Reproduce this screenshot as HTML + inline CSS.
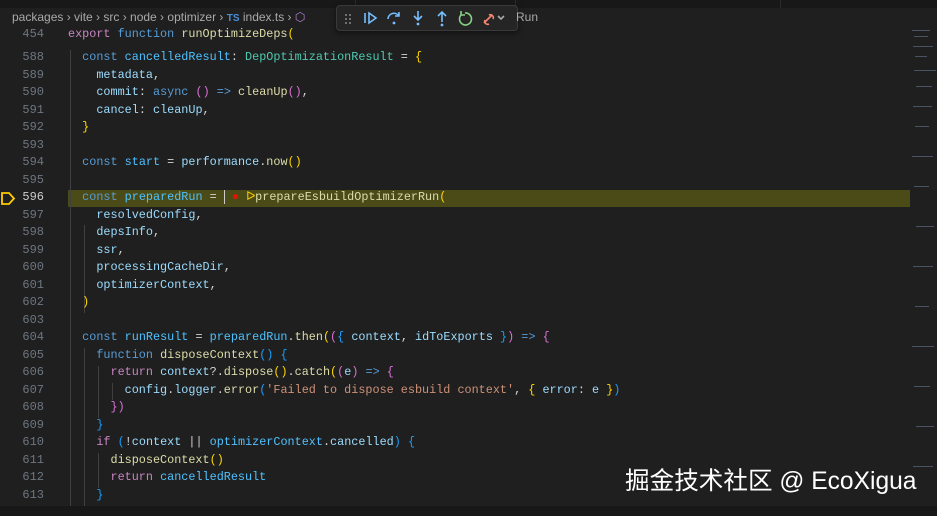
<!DOCTYPE html><html><head><meta charset="utf-8"><style>
body{margin:0;width:937px;height:516px;background:#1f1f1f;overflow:hidden;position:relative;font-family:"Liberation Mono",monospace}
.top{position:absolute;left:0;top:0;width:937px;height:8px;background:#181818}
.top i{position:absolute;top:0;height:8px;width:1px;background:#2b2b2b}
.bc{position:absolute;left:12px;top:8px;height:18px;font:12px/18px "Liberation Sans",sans-serif;color:#a9a9a9;white-space:nowrap}
.bc .ts{color:#4a8fd8;font-size:10px;font-weight:bold}
.dbg{position:absolute;left:336px;top:5px;width:180px;height:24px;background:#252526;border:1px solid #3a3a3a;border-radius:4px;box-shadow:0 2px 6px #0008}
.run{position:absolute;left:516px;top:8px;font:12px/18px "Liberation Sans",sans-serif;color:#a9a9a9}
.ln{position:absolute;left:0;width:44px;text-align:right;font-size:12px;color:#6e7681;line-height:17.5px}
.cl{position:absolute;left:68px;font-size:11.8px;line-height:17.5px;white-space:pre;color:#d4d4d4}
.hl{position:absolute;left:68px;top:190px;width:842px;height:17px;background:#4b4b18}
.g{position:absolute;width:1px;background:#404040}
.k{color:#569cd6}.p{color:#c586c0}.f{color:#dcdcaa}.v{color:#9cdcfe}.c{color:#4fc1ff}.t{color:#4ec9b0}.s{color:#ce9178}.y{color:#ffd700}.m{color:#da70d6}.b{color:#179fff}
.mini{position:absolute;left:910px;top:26px;width:27px;height:480px}
.wm{position:absolute;left:625px;top:465px;font:24.6px/34px "Liberation Sans","Noto Sans CJK SC",sans-serif;color:#fff;white-space:nowrap}
.bot{position:absolute;left:0;top:506px;width:937px;height:10px;background:#181818}
</style></head><body>
<div class="top"><i style="left:355px"></i><i style="left:515px"></i><i style="left:780px"></i></div>
<div class="bc">packages › vite › src › node › optimizer › <span class="ts">TS</span> index.ts › <span style="color:#b180d7">⬡</span></div>
<div class="dbg"><svg width="180" height="24" fill="none" stroke-width="1.6">
<g fill="#888"><circle cx="9" cy="9" r="1"/><circle cx="13" cy="9" r="1"/><circle cx="9" cy="13" r="1"/><circle cx="13" cy="13" r="1"/><circle cx="9" cy="17" r="1"/><circle cx="13" cy="17" r="1"/></g>
<path d="M28 7v10M32 7l7 5-7 5z" stroke="#75beff"/>
<path d="M51 13a6 6 0 0 1 11-3M62 6v4h-4" stroke="#75beff"/><circle cx="57" cy="17" r="1.4" fill="#75beff"/>
<path d="M81 5v9M77 10l4 4 4-4" stroke="#75beff"/><circle cx="81" cy="18" r="1.4" fill="#75beff"/>
<path d="M105 16V6M101 10l4-4 4 4" stroke="#75beff"/><circle cx="105" cy="19" r="1.4" fill="#75beff"/>
<path d="M124 9a6 6 0 1 0 4-2M124 5v4h4" stroke="#89d185"/>
<path d="M147 17l8-8M148 14a3 3 0 0 0 4 4M152 9a3 3 0 0 1 4 4" stroke="#f48771"/>
<path d="M161 10l3 3 3-3" stroke="#aaa"/></svg></div>
<div class="run">Run</div>
<div class="hl"></div>
<div class="g" style="left:70px;top:50px;height:456px"></div>
<div class="g" style="left:84px;top:225px;height:88px"></div>
<div class="g" style="left:84px;top:348px;height:158px"></div>
<div class="g" style="left:98px;top:366px;height:52px"></div>
<div class="g" style="left:98px;top:453px;height:35px"></div>
<div class="g" style="left:112px;top:383px;height:17px"></div>
<svg style="position:absolute;left:0;top:190px" width="16" height="17"><path d="M2 3h7l5 5.5-5 5.5H2z" fill="none" stroke="#ffcc00" stroke-width="1.8"/></svg>
<div class="ln" style="top:26px">454</div>
<div class="ln" style="top:49px">588<br>589<br>590<br>591<br>592<br>593<br>594<br>595<br><span style="color:#ccc">596</span><br>597<br>598<br>599<br>600<br>601<br>602<br>603<br>604<br>605<br>606<br>607<br>608<br>609<br>610<br>611<br>612<br>613</div>
<div class="cl" style="top:26px"><span class="p">export</span> <span class="k">function</span> <span class="f">runOptimizeDeps</span><span class="y">(</span></div>
<div class="cl" style="top:49px">  <span class="k">const</span> <span class="c">cancelledResult</span>: <span class="t">DepOptimizationResult</span> = <span class="y">{</span>
    <span class="v">metadata</span>,
    <span class="v">commit</span>: <span class="k">async</span> <span class="m">()</span> <span class="k">=&gt;</span> <span class="f">cleanUp</span><span class="m">()</span>,
    <span class="v">cancel</span>: <span class="v">cleanUp</span>,
  <span class="y">}</span>

  <span class="k">const</span> <span class="c">start</span> = <span class="v">performance</span>.<span class="f">now</span><span class="y">()</span>

  <span class="k">const</span> <span class="c">preparedRun</span> = <span style="border-left:1px solid #ccc"> </span><span style="color:#e51400">●</span> <span style="color:#ffcc00">ᐅ</span><span class="f">prepareEsbuildOptimizerRun</span><span class="y">(</span>
    <span class="v">resolvedConfig</span>,
    <span class="v">depsInfo</span>,
    <span class="v">ssr</span>,
    <span class="v">processingCacheDir</span>,
    <span class="v">optimizerContext</span>,
  <span class="y">)</span>

  <span class="k">const</span> <span class="c">runResult</span> = <span class="c">preparedRun</span>.<span class="f">then</span><span class="y">(</span><span class="m">(</span><span class="b">{</span> <span class="v">context</span>, <span class="v">idToExports</span> <span class="b">}</span><span class="m">)</span> <span class="k">=&gt;</span> <span class="m">{</span>
    <span class="k">function</span> <span class="f">disposeContext</span><span class="b">()</span> <span class="b">{</span>
      <span class="p">return</span> <span class="v">context</span>?.<span class="f">dispose</span><span class="y">()</span>.<span class="f">catch</span><span class="y">(</span><span class="m">(</span><span class="v">e</span><span class="m">)</span> <span class="k">=&gt;</span> <span class="m">{</span>
        <span class="v">config</span>.<span class="v">logger</span>.<span class="f">error</span><span class="b">(</span><span class="s">'Failed to dispose esbuild context'</span>, <span class="y">{</span> <span class="v">error</span>: <span class="v">e</span> <span class="y">}</span><span class="b">)</span>
      <span class="m">})</span>
    <span class="b">}</span>
    <span class="p">if</span> <span class="b">(</span>!<span class="v">context</span> || <span class="c">optimizerContext</span>.<span class="v">cancelled</span><span class="b">)</span> <span class="b">{</span>
      <span class="f">disposeContext</span><span class="y">()</span>
      <span class="p">return</span> <span class="c">cancelledResult</span>
    <span class="b">}</span></div>
<svg class="mini"><g fill="#5a6a80" opacity=".7">
<rect x="2" y="4" width="18" height="1"/><rect x="4" y="10" width="14" height="1"/><rect x="3" y="20" width="20" height="1"/><rect x="5" y="30" width="12" height="1"/><rect x="4" y="44" width="22" height="1"/><rect x="6" y="60" width="16" height="1"/><rect x="3" y="80" width="19" height="1"/><rect x="5" y="100" width="14" height="1"/><rect x="2" y="130" width="21" height="1"/><rect x="4" y="160" width="15" height="1"/><rect x="6" y="200" width="18" height="1"/><rect x="3" y="240" width="20" height="1"/><rect x="5" y="280" width="14" height="1"/><rect x="2" y="320" width="22" height="1"/><rect x="4" y="360" width="16" height="1"/><rect x="6" y="400" width="18" height="1"/><rect x="3" y="440" width="20" height="1"/></g></svg>
<div class="wm">掘金技术社区 @ EcoXigua</div>
<div class="bot"></div>
</body></html>
